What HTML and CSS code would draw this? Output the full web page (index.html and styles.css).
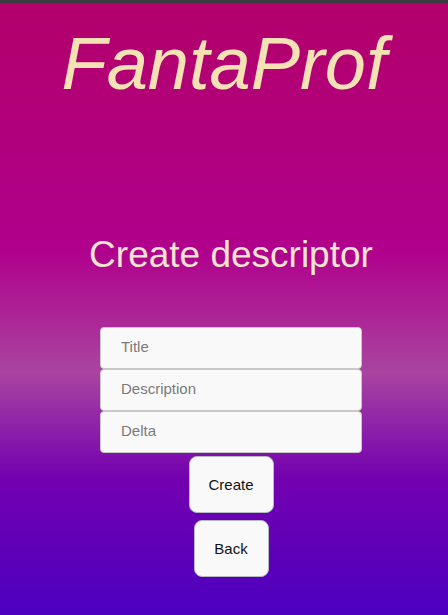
FILE: index.html
```html
<!DOCTYPE html>
<html lang="en">
<head>
<meta charset="utf-8">
<title>FantaProf - Create descriptor</title>
<link rel="stylesheet" href="styles.css">
</head>
<body>
<div class="topbar"></div>
<header class="brand">
  <h1 class="brand-title">FantaProf</h1>
</header>
<main class="content">
  <h2 class="page-title">Create descriptor</h2>
  <form class="descriptor-form">
    <div class="fields">
      <input class="field" type="text" placeholder="Title">
      <input class="field" type="text" placeholder="Description">
      <input class="field" type="text" placeholder="Delta">
    </div>
    <button class="btn btn-create" type="button">Create</button>
    <button class="btn btn-back" type="button">Back</button>
  </form>
</main>
</body>
</html>
```

FILE: styles.css
```css
html, body {
  margin: 0;
  padding: 0;
}

body {
  width: 448px;
  min-height: 615px;
  font-family: "Liberation Sans", Arial, sans-serif;
  background: linear-gradient(to bottom,
    #b3006b 0px,
    #b0008c 250px,
    #a944a0 372px,
    #7300b0 480px,
    #4c00c0 615px);
  overflow: hidden;
}

.topbar {
  height: 3px;
  background: #3b3b3d;
}

.brand {
  padding-top: 21px;
  text-align: center;
}

.brand-title {
  margin: 0;
  font-size: 74px;
  line-height: 80px;
  font-style: italic;
  font-weight: normal;
  color: #f5e2b4;
}

.content {
  padding-left: 14px;
  display: flex;
  flex-direction: column;
  align-items: center;
}

.page-title {
  margin: 129px 0 0;
  font-size: 37px;
  line-height: 44px;
  font-weight: normal;
  color: #f2e4cf;
}

.descriptor-form {
  margin-top: 50px;
  display: flex;
  flex-direction: column;
  align-items: center;
}

.fields {
  display: flex;
  flex-direction: column;
  width: 262px;
}

.field {
  box-sizing: border-box;
  height: 42px;
  margin: 0;
  padding: 0 20px 3px;
  border: 1px solid #c9c9c9;
  border-radius: 4px;
  background: #f9f9f9;
  font-family: "Liberation Sans", Arial, sans-serif;
  font-size: 15px;
  color: #333;
  outline: none;
}

.field::placeholder {
  color: #7a7a7a;
}

.btn {
  box-sizing: border-box;
  height: 57px;
  padding: 0 19px 1px;
  border: 1px solid #b9b9c4;
  border-radius: 8px;
  background: #f9f9f9;
  font-family: "Liberation Sans", Arial, sans-serif;
  font-size: 15px;
  color: #111;
  cursor: pointer;
}

.btn-create {
  margin-top: 3px;
  width: 85px;
}

.btn-back {
  margin-top: 7px;
  width: 75px;
}
```
